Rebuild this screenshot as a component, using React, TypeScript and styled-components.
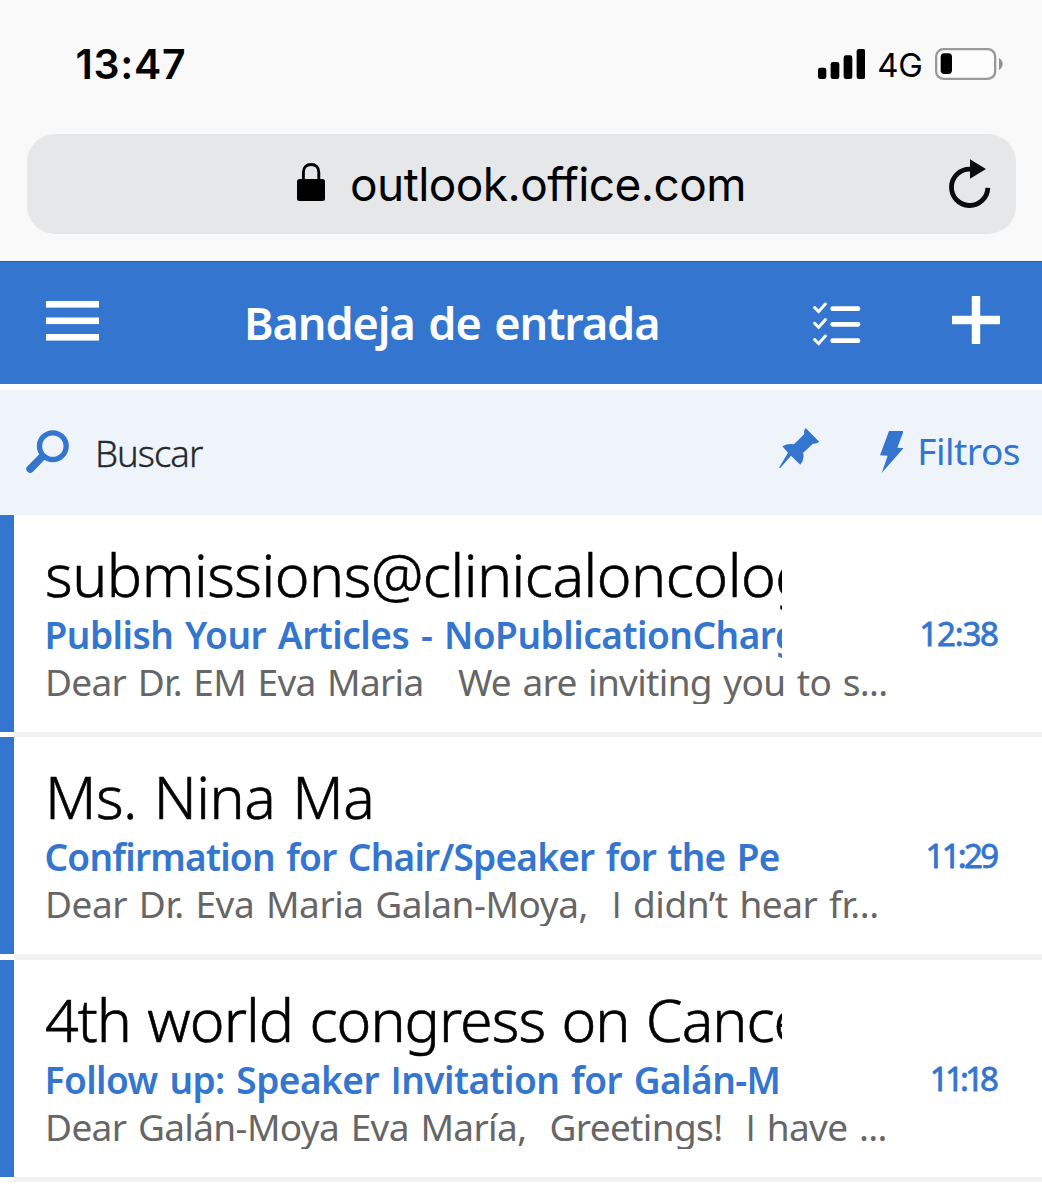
import React from 'react';
import styled, { createGlobalStyle } from 'styled-components';

const BLUE = '#3375cf';
const HUMANIST = '"Noto Sans", "Open Sans", sans-serif';
const SYSTEM = 'Inter, Roboto, sans-serif';

const GlobalStyle = createGlobalStyle`
  *, *::before, *::after { box-sizing: border-box; }
  body { margin: 0; background: #fff; }
  svg { display: block; flex: none; }
`;

const Page = styled.main`
  width: 1042px;
  height: 1200px;
  overflow: hidden;
  background: #fff;
  font-family: ${HUMANIST};
`;

const BrowserChrome = styled.header`
  height: 261px;
  background: #f9f9f9;
  font-family: ${SYSTEM};
  color: #000;
`;

const StatusBar = styled.div`
  display: flex;
  align-items: center;
  justify-content: space-between;
  height: 133.5px;
  padding: 0 39px 5.5px 75.5px;
`;

const Clock = styled.time`
  font-size: 41px;
  font-weight: 600;
  line-height: 50px;
  letter-spacing: 0.65px;
`;

const StatusIcons = styled.div`
  display: flex;
  align-items: center;
`;

const Network = styled.span`
  margin: 0 12.5px 0 12.5px;
  padding-top: 2px;
  font-size: 33px;
  line-height: 42px;
  letter-spacing: -0.4px;
`;

const AddressBar = styled.div`
  display: grid;
  grid-template-columns: 1fr auto 1fr;
  align-items: center;
  height: 100.5px;
  margin: 0 26px 0 27px;
  padding: 0 25.5px;
  border-radius: 28px;
  background: #e6e7e9;
`;

const Address = styled.div`
  display: flex;
  grid-column: 2;
  align-items: center;
  gap: 25px;
`;

const Host = styled.span`
  font-size: 46px;
  line-height: 60px;
  letter-spacing: -0.57px;
`;

const IconSlot = styled.span<{ $left?: number; $shift?: number }>`
  display: flex;
  flex: none;
  margin-left: ${(p) => p.$left ?? 0}px;
  padding-top: ${(p) => Math.max(p.$shift ?? 0, 0)}px;
  padding-bottom: ${(p) => Math.max(-(p.$shift ?? 0), 0)}px;
`;

const ReloadSlot = styled(IconSlot)`
  justify-self: end;
`;

const TitleBar = styled.nav`
  display: flex;
  align-items: center;
  height: 123px;
  padding: 0 42px 0 46px;
  border-top: 1px solid #2860aa;
  background: ${BLUE};
  color: #fff;
`;

const Title = styled.h1`
  flex: 1;
  margin: 0 0 0 145px;
  font-size: 45px;
  font-weight: 600;
  line-height: 62px;
  letter-spacing: -1.08px;
  word-spacing: 3px;
  white-space: nowrap;
`;

const SearchBar = styled.div`
  display: flex;
  align-items: center;
  height: 124.7px;
  margin-top: 6px;
  padding: 0 22px 0 26px;
  background: #eff4fb;
  color: ${BLUE};
`;

const SearchLabel = styled.span`
  flex: 1;
  margin-left: 26px;
  padding-top: 1px;
  font-size: 36.5px;
  font-weight: 300;
  line-height: 50px;
  letter-spacing: -1px;
  color: #25282c;
  -webkit-text-stroke: 0.35px;
`;

const FilterLabel = styled.span`
  margin-left: 14px;
  padding-bottom: 2px;
  font-size: 37px;
  font-weight: 400;
  line-height: 50px;
  letter-spacing: -0.5px;
`;

const MailList = styled.ul`
  margin: 0;
  padding: 0;
  list-style: none;
`;

const MailRow = styled.li`
  display: grid;
  grid-template-columns: 14px 1fr;
  grid-template-rows: 217.2px 5.4px;
`;

const UnreadMark = styled.span`
  background: ${BLUE};
`;

const Divider = styled.span`
  grid-column: 2;
  background: #f2f2f2;
`;

const MailBody = styled.article`
  display: grid;
  grid-template-columns: 736px 1fr;
  grid-template-rows: 76px 47px 45px;
  padding: 21px 43px 0 32px;
`;

const Line = styled.div<{ $track: number }>`
  grid-column: 1;
  overflow: hidden;
  letter-spacing: ${(p) => p.$track}px;
  white-space: pre;
`;

const Sender = styled(Line)`
  margin-left: -1px;
  font-size: 59px;
  font-weight: 300;
  line-height: 76px;
  word-spacing: 2px;
  color: #000;
  -webkit-text-stroke: 0.6px;
`;

const Subject = styled(Line)`
  margin-left: -1.5px;
  font-size: 37px;
  font-weight: 600;
  line-height: 45px;
  word-spacing: 2.5px;
  color: ${BLUE};
`;

const Preview = styled(Line)`
  grid-column: 1 / 3;
  margin-left: -1px;
  font-size: 37px;
  font-weight: 400;
  line-height: 45px;
  word-spacing: 2.5px;
  color: #666;
`;

const Received = styled.time<{ $track: number }>`
  justify-self: end;
  margin-right: ${(p) => -p.$track}px;
  font-size: 33px;
  font-weight: 400;
  line-height: 43px;
  letter-spacing: ${(p) => p.$track}px;
  color: ${BLUE};
  -webkit-text-stroke: 0.8px;
`;

const PlainCapital = styled.span`
  font-family: "Open Sans", sans-serif;
`;

/* Sets a capital I without slab serifs, the other letters in the running font. */
const Humanist = ({ text }: { text: string }) => (
  <>
    {text.split(/(I)/).map((part, i) =>
      part === 'I' ? <PlainCapital key={i}>I</PlainCapital> : part,
    )}
  </>
);

const SignalIcon = () => (
  <svg width="47.3" height="30" viewBox="113 87 142 90">
    <rect x="113" y="143" width="25" height="34" rx="7" />
    <rect x="151" y="126" width="26" height="51" rx="7" />
    <rect x="190" y="106" width="26" height="71" rx="7" />
    <rect x="229" y="87" width="26" height="90" rx="7" />
  </svg>
);

const BatteryIcon = () => (
  <svg width="68" height="32" viewBox="466 84 204 96">
    <rect x="469.5" y="87.5" width="177" height="89" rx="22" fill="#fdfdfd" stroke="#999" strokeWidth="7" />
    <rect x="483" y="100" width="34" height="62" rx="11" />
    <path d="M658 114c7 5 11 11 11 18s-4 13-11 18z" fill="#8f8f8f" />
  </svg>
);

const LockIcon = () => (
  <svg width="28" height="38" viewBox="0 0 28 38">
    <path d="M6.4 18V9.2c0-4.8 3.1-7.7 7.7-7.7s7.7 2.9 7.7 7.7V18" fill="none" stroke="#000" strokeWidth="2.9" />
    <rect x="0" y="16" width="28" height="22" rx="2.5" />
  </svg>
);

const ReloadIcon = () => (
  <svg width="41.3" height="48.7" viewBox="147 118 124 146">
    <path d="M211 148.5A54.5 54.5 0 1 0 263.5 204.5" fill="none" stroke="#0b0b0c" strokeWidth="14.5" />
    <path d="M210 119L258 148L210 177Z" fill="#0b0b0c" />
  </svg>
);

const MenuIcon = () => (
  <svg width="53" height="40" viewBox="0 0 53 40" fill="#fff">
    <rect y="0" width="53" height="6.6" />
    <rect y="16.5" width="53" height="6.6" />
    <rect y="33" width="53" height="6.6" />
  </svg>
);

const ChecklistIcon = () => (
  <svg width="48" height="44" viewBox="220 127 144 132" fill="none" stroke="#fff" strokeLinecap="round">
    {[147, 194, 243].map((y) => (
      <g key={y}>
        <path d={`M225 ${y - 3}L237 ${y + 9}L257 ${y - 14}`} strokeWidth="9" />
        <path d={`M279 ${y}H355`} strokeWidth="14" />
      </g>
    ))}
  </svg>
);

const PlusIcon = () => (
  <svg width="48" height="48" viewBox="0 0 48 48" fill="#fff">
    <path d="M19.8 0h8.4v19.8H48v8.4H28.2V48h-8.4V28.2H0v-8.4h19.8z" />
  </svg>
);

const SearchIcon = () => (
  <svg width="43" height="43" viewBox="78 510 129 129" fill="none" stroke={BLUE} strokeLinecap="round">
    <circle cx="158.5" cy="558.5" r="40" strokeWidth="16" />
    <path d="M127 590L90.5 627" strokeWidth="23" />
  </svg>
);

const PinIcon = () => (
  <svg width="40.3" height="40.7" viewBox="116 502 121 122" fill={BLUE}>
    <path d="M196 502L237 543Q230 550 218 549L188 577Q194 595 180 612L152 585L118 624L116 621L143 576L126 557Q143 547 161 551L192 520Q189 511 196 502Z" />
  </svg>
);

const BoltIcon = () => (
  <svg width="23.7" height="42" viewBox="420 514 71 126" fill={BLUE}>
    <path d="M447 514H491L472 564L491 565L425 640L443 588L420 587Z" />
  </svg>
);

type Mail = {
  sender: string;
  subject: string;
  preview: string;
  time: string;
  track: [number, number, number, number];
};

const mails: Mail[] = [
  {
    sender: 'submissions@clinicaloncology',
    subject: 'Publish Your Articles - NoPublicationCharges',
    preview: 'Dear Dr. EM Eva Maria   We are inviting you to s...',
    time: '12:38',
    track: [-0.5, -0.48, -0.68, -1.15],
  },
  {
    sender: 'Ms. Nina Ma',
    subject: 'Confirmation for Chair/Speaker for the Pe',
    preview: 'Dear Dr. Eva Maria Galan-Moya,  I didn’t hear fr...',
    time: '11:29',
    track: [-0.5, -0.76, -0.44, -2.7],
  },
  {
    sender: '4th world congress on Cancer',
    subject: 'Follow up: Speaker Invitation for Galán-M',
    preview: 'Dear Galán-Moya Eva María,  Greetings!  I have ...',
    time: '11:18',
    track: [-0.97, -0.53, -0.63, -3.8],
  },
];

export default function App() {
  return (
    <Page>
      <GlobalStyle />
      <BrowserChrome>
        <StatusBar>
          <Clock>13:47</Clock>
          <StatusIcons>
            <SignalIcon />
            <Network>4G</Network>
            <BatteryIcon />
          </StatusIcons>
        </StatusBar>
        <AddressBar>
          <Address>
            <IconSlot $shift={-3}>
              <LockIcon />
            </IconSlot>
            <Host>outlook.office.com</Host>
          </Address>
          <ReloadSlot>
            <ReloadIcon />
          </ReloadSlot>
        </AddressBar>
      </BrowserChrome>
      <TitleBar>
        <IconSlot $shift={-4}>
          <MenuIcon />
        </IconSlot>
        <Title>Bandeja de entrada</Title>
        <IconSlot $shift={2}>
          <ChecklistIcon />
        </IconSlot>
        <IconSlot $left={91} $shift={-6}>
          <PlusIcon />
        </IconSlot>
      </TitleBar>
      <SearchBar>
        <IconSlot $shift={-2}>
          <SearchIcon />
        </IconSlot>
        <SearchLabel>Buscar</SearchLabel>
        <IconSlot $shift={-9}>
          <PinIcon />
        </IconSlot>
        <IconSlot $left={60.5}>
          <BoltIcon />
        </IconSlot>
        <FilterLabel>Filtros</FilterLabel>
      </SearchBar>
      <MailList>
        {mails.map((mail) => (
          <MailRow key={mail.time}>
            <UnreadMark />
            <MailBody>
              <Sender $track={mail.track[0]}>{mail.sender}</Sender>
              <Subject $track={mail.track[1]}>
                <Humanist text={mail.subject} />
              </Subject>
              <Received $track={mail.track[3]}>{mail.time}</Received>
              <Preview $track={mail.track[2]}>
                <Humanist text={mail.preview} />
              </Preview>
            </MailBody>
            <Divider />
          </MailRow>
        ))}
      </MailList>
    </Page>
  );
}
